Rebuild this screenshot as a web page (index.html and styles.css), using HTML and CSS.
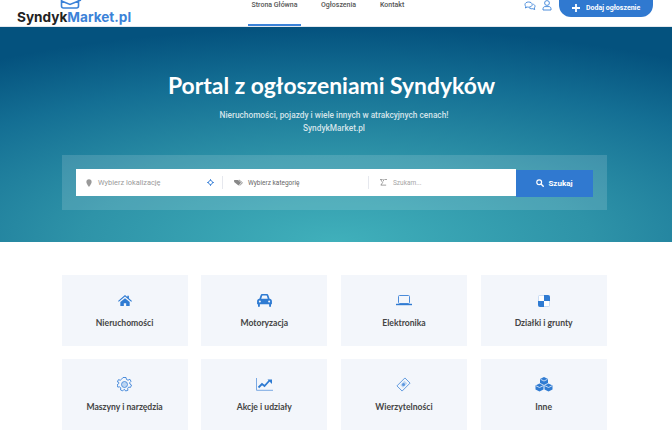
FILE: index.html
```html
<!DOCTYPE html>
<html lang="pl">
<head>
<meta charset="utf-8">
<title>SyndykMarket.pl</title>
<link rel="stylesheet" href="styles.css">
</head>
<body>
<header class="header">
  <a class="logo">
    <svg class="logo-icon" viewBox="0 0 22 9" width="22" height="9"><path d="M1.500 -3V6a2 2 0 0 0 2 2h13a2 2 0 0 0 2-2V-3M1.500 1L10 4.500 21 0" fill="none" stroke="#3b82d8" stroke-width="1.600"/></svg>
    <span class="logo-text"><span class="logo-dark">Syndyk</span><span class="logo-blue">Market.pl</span></span>
  </a>
  <nav class="nav">
    <a class="nav-item active">Strona Główna</a>
    <a class="nav-item">Ogłoszenia</a>
    <a class="nav-item">Kontakt</a>
  </nav>
  <div class="actions">
    <svg class="act-icon" viewBox="0 0 12 10" width="12" height="10"><path d="M1 3.600C1 2 2.600 1 4.600 1s3.600 1 3.600 2.600-1.600 2.600-3.600 2.600c-.5 0-1 0-1.400-.2L1.400 7l.4-1.800C1.300 4.800 1 4.200 1 3.600zM9.400 3.200c1 .4 1.600 1.200 1.600 2.200 0 .6-.3 1.100-.7 1.500l.4 1.700-1.800-.9c-1.300.3-2.900 0-3.700-.9" fill="none" stroke="#3b82d8" stroke-width=".9"/></svg>
    <svg class="act-icon user" viewBox="0 0 10 11" width="10" height="11"><circle cx="5" cy="3" r="2.400" fill="none" stroke="#3b82d8" stroke-width=".9"/><path d="M1 10V8.800C1 7.400 2 6.600 3 6.600h4c1 0 2 .8 2 2.200V10z" fill="none" stroke="#3b82d8" stroke-width=".9"/></svg>
    <a class="add-btn"><svg viewBox="0 0 8 8" width="8" height="8"><path d="M4 0v8M0 4h8" stroke="#fff" stroke-width="1.800"/></svg>Dodaj ogłoszenie</a>
  </div>
</header>
<section class="hero">
  <h1 class="hero-title">Portal z ogłoszeniami Syndyków</h1>
  <p class="hero-sub">Nieruchomości, pojazdy i wiele innych w atrakcyjnych cenach!<br>SyndykMarket.pl</p>
  <div class="search-panel">
    <div class="search-box">
      <div class="field field-loc">
        <svg viewBox="0 0 8 10" width="6" height="8"><path d="M4 0a3.500 3.500 0 0 1 3.500 3.500C7.500 6 4 10 4 10S.5 6 .5 3.500A3.500 3.500 0 0 1 4 0z" fill="#999"/></svg>
        <span class="ph ph-loc">Wybierz lokalizację</span>
        <svg class="target" viewBox="0 0 8 8" width="7" height="7"><circle cx="4" cy="4" r="2.300" fill="none" stroke="#3b82d8" stroke-width="1"/><path d="M4 0v2M4 6v2M0 4h2M6 4h2" stroke="#3b82d8" stroke-width="1"/></svg>
      </div>
      <div class="field field-cat">
        <svg viewBox="0 0 10 8" width="9" height="7"><path d="M0 1h4.500L8 4.200 5 7.500 0 3.500z" fill="#888"/><path d="M5.500 1L9.500 4.200 6.500 7.500" fill="none" stroke="#888"/></svg>
        <span class="ph ph-cat">Wybierz kategorię</span>
      </div>
      <div class="field field-key">
        <svg viewBox="0 0 8 8" width="7" height="7"><path d="M0 .5h3M5 .5h3M4 .5v2M1 1l2 3-2 3h6M3 7.500" fill="none" stroke="#777" stroke-width=".8"/></svg>
        <span class="ph ph-key">Szukam...</span>
      </div>
    </div>
    <a class="search-btn">
      <svg viewBox="0 0 8 8" width="8" height="8"><circle cx="3.200" cy="3.200" r="2.400" fill="none" stroke="#fff" stroke-width="1.200"/><path d="M5 5l2.700 2.700" stroke="#fff" stroke-width="1.400"/></svg>
      Szukaj
    </a>
  </div>
</section>
<section class="cats">
  <a class="cat">
    <div class="cat-icon"><svg viewBox="0 0 18 14" width="14" height="11"><path d="M9 0l3 2.500V1h2v3.200L18 7.500l-1 1-8-6.500-8 6.500-1-1zM3 9l6-5 6 5v5h-4.500v-3.500h-3V14H3z" fill="#2f7bd2"/></svg></div>
    <span>Nieruchomości</span>
  </a>
  <a class="cat">
    <div class="cat-icon"><svg viewBox="0 0 18 14" width="17" height="13"><path d="M3.500 5l1.300-3.600C5.100.600 5.800 0 6.700 0h4.600c.9 0 1.600.6 1.900 1.400L14.500 5c1.500.3 2.500 1.300 2.500 2.700V11h-1v2a1 1 0 0 1-2 0v-2H4v2a1 1 0 0 1-2 0v-2H1V7.700C1 6.300 2 5.300 3.500 5zM5.500 5h7l-1-3a.6.6 0 0 0-.6-.4H7.100a.6.6 0 0 0-.6.4zM4 7a1 1 0 1 0 0 2.200A1 1 0 0 0 4 7zm10 0a1 1 0 1 0 0 2.200A1 1 0 0 0 14 7z" fill="#2f7bd2" fill-rule="evenodd"/></svg></div>
    <span>Motoryzacja</span>
  </a>
  <a class="cat">
    <div class="cat-icon"><svg viewBox="0 0 16 11" width="16" height="11"><rect x="2.500" y=".5" width="11" height="8" rx="1" fill="none" stroke="#4a8bda"/><path d="M0 9.500h16" stroke="#2f7bd2" stroke-width="1.400"/></svg></div>
    <span>Elektronika</span>
  </a>
  <a class="cat">
    <div class="cat-icon"><svg viewBox="0 0 12 12" width="12" height="12"><rect width="12" height="12" rx="2" fill="#c9dcf4"/><path d="M6 0h4a2 2 0 0 1 2 2v4H6zM0 6h6v6H2a2 2 0 0 1-2-2z" fill="#2f7bd2"/><rect x="1" y="1" width="5" height="5" fill="#fff"/><rect x="6" y="6" width="5" height="5" fill="#fff"/></svg></div>
    <span>Działki i grunty</span>
  </a>
  <a class="cat">
    <div class="cat-icon"><svg viewBox="0 0 15 15" width="15" height="15"><path d="M6 .5h3l.5 2 1.500.7 1.900-.9 1.100 2-1.300 1.400.2 1.300 1.600 1-1 2.400-1.800-.3-1 1.200.2 2-2.300.7-1.100-1.600H7l-1.300 1.500-2.200-1 .3-2-1.100-1-1.900.2-.7-2.300 1.600-1.100v-1.500L.4 4.900l1-2.200 2 .5 1-.8z" fill="none" stroke="#3b82d8" stroke-width=".9"/><circle cx="7.500" cy="7.500" r="3" fill="#bcd5f2" stroke="#3b82d8" stroke-width=".8"/></svg></div>
    <span>Maszyny i narzędzia</span>
  </a>
  <a class="cat">
    <div class="cat-icon"><svg viewBox="0 0 17 13" width="17" height="13"><path d="M.5 0v12.300H17" fill="none" stroke="#7aa9e3" stroke-width="1"/><path d="M2.500 9.500l3.500-3.500 2.500 2 5-5.500" fill="none" stroke="#2f7bd2" stroke-width="1.800"/><path d="M11.500 1.500H16V6z" fill="#2f7bd2"/></svg></div>
    <span>Akcje i udziały</span>
  </a>
  <a class="cat">
    <div class="cat-icon"><svg viewBox="0 0 16 16" width="15" height="15"><path d="M1 9.500L9.500 1l5.500 5.500L6.500 15z" fill="none" stroke="#5a96de" stroke-width="1"/><path d="M4.500 8.500L9 4l3 3-4.500 4.500z" fill="#bcd5f2"/><circle cx="8" cy="8" r="1.600" fill="#5a96de"/></svg></div>
    <span>Wierzytelności</span>
  </a>
  <a class="cat">
    <div class="cat-icon"><svg viewBox="0 0 18 15" width="18" height="15"><path d="M9 0l4 2v4L9 8 5 6V2zM4.500 6.500l4 2v4l-4 2-4-2v-4zM13.500 6.500l4 2v4l-4 2-4-2v-4z" fill="#2f7bd2"/><path d="M5.500 2.300L9 4l3.500-1.700M1 8.800l3.500 1.700L8 8.800M10 8.800l3.500 1.700L17 8.800" fill="none" stroke="#e8f0fa" stroke-width=".8"/></svg></div>
    <span>Inne</span>
  </a>
</section>
</body>
</html>
```
FILE: styles.css
```css
* { box-sizing: border-box; }
html, body { margin: 0; padding: 0; height: 448px; overflow: hidden; background: #fff; }
body { font-family: "Roboto", "Liberation Sans", sans-serif; color: #333; }
svg { display: block; flex: none; }

.header { display: flex; height: 27px; overflow: hidden; padding: 0 0 0 17px; background: #fff; border-bottom: 1px solid #e3e8ee; }
.logo { display: block; width: 114px; position: relative; flex: none; }
.logo-icon { position: absolute; left: 43px; top: 0; }
.logo-text { position: absolute; left: 0; top: 9px; font-family: "Inter", "Liberation Sans", sans-serif; font-weight: 700; font-size: 13.600px; line-height: 17px; white-space: nowrap; }
.logo-dark { color: #222; }
.logo-blue { color: #3b82d8; }

.nav { display: flex; margin-left: 117px; height: 26px; }
.nav-item { font-size: 7px; font-weight: 500; color: #555; height: 26px; line-height: 9px; padding-top: 1px; text-align: center; white-space: nowrap; }
.nav-item.active { width: 53px; border-bottom: 2px solid #3b82d8; }
.nav-item:nth-child(2) { margin-left: 20px; width: 35px; }
.nav-item:nth-child(3) { margin-left: 24px; width: 24px; }

.actions { display: flex; align-items: flex-start; margin-left: auto; margin-right: 19px; }
.act-icon { margin-top: 1px; }
.act-icon.user { margin-left: 6px; margin-top: 0; }
.add-btn { display: flex; align-items: center; gap: 6px; margin-left: 7px; margin-top: -1px; width: 94px; height: 18px; padding: 0 0 0 13px; background: #3079d0; color: #fff; border-radius: 0 0 12px 12px; font-size: 7px; font-weight: 700; white-space: nowrap; }

.hero { height: 215px; padding-top: 43px; text-align: center; color: #fff; background: radial-gradient(ellipse 640px 215px at 50% 100%, #40b0bb 0%, #2e93a8 40%, #146f94 75%, #04527e 100%), #04527e; }
.hero-title { margin: 0; padding-right: 9px; font-family: "Lato", "Open Sans", sans-serif; font-weight: 700; font-size: 22.900px; line-height: 30px; }
.hero-sub { margin: 9px 0 0; padding-right: 4px; font-size: 8.300px; font-weight: 500; line-height: 12.500px; color: #d4e4ea; }
.search-panel { display: flex; margin: 21px 65px 0 62px; height: 55px; padding: 14px 14px 0; background: rgba(255,255,255,.14); }
.search-box { display: flex; align-items: center; width: 440px; height: 27px; background: #fff; flex: none; }
.field { display: flex; align-items: center; height: 13px; position: relative; }
.field-loc { width: 147px; padding-left: 10px; gap: 6px; border-right: 1px solid #e6e8ee; }
.target { position: absolute; right: 8px; top: 3px; }
.field-cat { width: 146px; padding-left: 11px; gap: 5px; border-right: 1px solid #e6e8ee; }
.field-key { flex: 1; padding-left: 11px; gap: 6px; }
.ph { white-space: nowrap; }
.ph-loc { font-size: 7.400px; color: #9a9a9a; }
.ph-cat { font-size: 6.500px; color: #666; }
.ph-key { font-size: 6.500px; color: #a5a5a5; }
.search-btn { display: flex; align-items: center; justify-content: center; gap: 4px; width: 77px; height: 27px; margin-top: 0.5px; background: #3079d0; color: #fff; font-size: 8px; font-weight: 700; flex: none; }

.cats { display: grid; grid-template-columns: repeat(4, 126px); column-gap: 13.700px; row-gap: 13.500px; margin: 33px 0 0 61.600px; }
.cat { display: flex; flex-direction: column; align-items: center; height: 70.500px; padding-top: 18px; background: #f3f6fb; font-family: "Lato", "Open Sans", sans-serif; font-weight: 700; font-size: 8.600px; color: #444; position: relative; }
.cat-icon { display: flex; align-items: center; justify-content: center; height: 15px; }
.cat span { position: absolute; top: 41.500px; line-height: 12px; white-space: nowrap; }
```
